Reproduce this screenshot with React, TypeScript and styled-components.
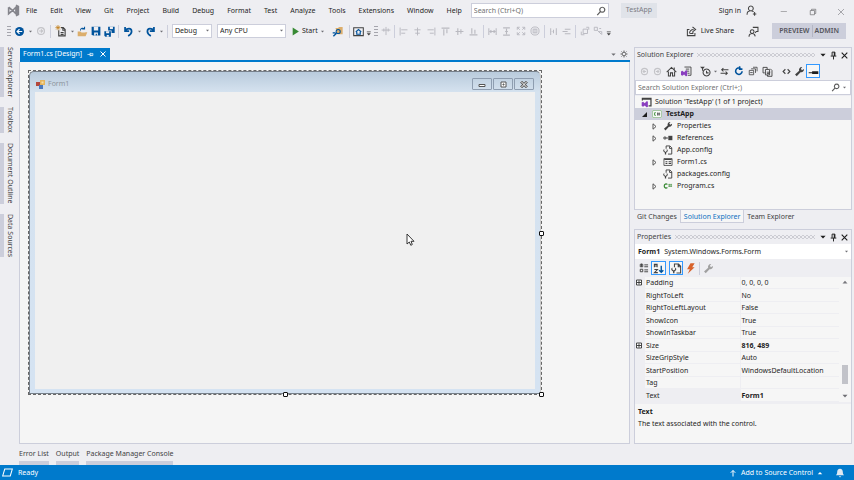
import React from "react";
import styled, { createGlobalStyle, css } from "styled-components";

const c = {
  chrome: "#eeeef2",
  surface: "#f6f6f6",
  border: "#cccedb",
  blue: "#007acc",
  text: "#1e1e1e",
  muted: "#717171",
  icon: "#424242",
  navy: "#00539c",
  off: "#b9b9c0",
};

const Global = createGlobalStyle`
  * { box-sizing: border-box; }
  body { margin: 0; background: ${c.chrome}; }
  body, button, input, select { font-family: "Noto Sans", "Open Sans", sans-serif; font-size: 7px; line-height: 12px; color: ${c.text}; }
  button { border: 0; padding: 0; background: none; display: inline-flex; align-items: center; justify-content: center; white-space: nowrap; }
  svg { display: block; flex: none; }
`;

/* ---------- icons ---------- */
type Shape = { d: string; fill?: string; stroke?: string; w?: number };
const f = (d: string, fill = c.icon): Shape => ({ d, fill });
const s = (d: string, stroke = c.icon, w = 1.5): Shape => ({ d, stroke, w });

const icons: Record<string, Shape[]> = {
  logo: [s("M2 4v8l5-4 4-4v8L7 8 2 4M11 1.5 14 3v10l-3 1.5M13 2v12", "#85858c", 2)],
  back: [f("M8 1.5a6.500 6.500 0 1 0 0 13a6.500 6.500 0 1 0 0-13", c.navy), s("M12 8H5M8 4.500 4.500 8 8 11.500", "#fff", 1.7)],
  backOff: [s("M8 2.500a5.500 5.500 0 1 0 0 11a5.500 5.500 0 1 0 0-11M11 8H5.500M8 5.500 5.500 8 8 10.500", "#c4c4c8", 1.9)],
  fwdOff: [s("M8 2.500a5.500 5.500 0 1 0 0 11a5.500 5.500 0 1 0 0-11M5 8h5.500M8 5.500 10.500 8 8 10.500", "#c4c4c8", 1.9)],
  newFile: [s("M5 7v7.500h8.500V6L11 3.500H8M10.500 3.500V7H13.500M7.500 10h4M7.500 12.500h4"), s("M4 0v7M.5 3.500h7M1.500 1l5 5M6.500 1l-5 5", "#c27d1a", 1)],
  open: [f("M1 8h4l1.500 1.500H12V9h3l-2.500 6H1z", "#dcae6c"), s("M5 6.500C5 3 9 2.500 11 4M11 1v3.500H7.500", c.navy, 1.500)],
  save: [f("M1 1h14v14H3l-2-2z", c.navy), f("M4.500 1h7v6h-7zM5 10.500h6v4.500H9.500v-2.500H7.500V15H5z", c.chrome)],
  saveAll: [f("M6 1h9.500v9H11V6.500H6z", c.navy), f("M8.500 1h4.500v3.500H8.500z", c.chrome), f("M.5 7.500h9.500v8H2l-1.500-1.500z", c.navy), f("M3 7.500h4.500v3H3zM4 13h3v2.500H4z", c.chrome)],
  undo: [s("M3 1.500v6h6M3 7C6 3 12.500 2.500 12.500 8c0 3-2.500 5-5 6.500", c.navy, 2.500)],
  redo: [s("M13 1.500v6H7M13 7C10 3 3.500 2.500 3.500 8c0 3 2.500 5 5 6.500", c.navy, 2.500)],
  play: [f("M3 1 14 8 3 15z", "#388a34")],
  find: [f("M5 3h4l1-1.500h5.500V12H8z", "#dcae6c"), s("M9 5a3 3 0 1 0 0 6a3 3 0 1 0 0-6", c.navy, 1.500), s("M6.500 10.500 2 15M1 10h4", c.navy, 2)],
  homeBox: [s("M1 2.500h14v11.500H1z", c.icon, 1.500), s("M4 8.500 8 5l4 3.500M5.500 8.500v3.500h5V8.500", c.navy, 1.700)],
  snap: [s("M1 6.500h14M8 1.500v13M4.500 4v5M11.500 4v5", c.off)],
  alignL: [s("M2 1v14M4 5h11M4 11h7", c.off, 1.700)],
  alignC: [s("M8 1v14M2.500 5h11M4 11h8", c.off, 1.700)],
  alignR: [s("M14 1v14M1 5h11M5 11h7", c.off, 1.700)],
  alignT: [s("M1 2h14M5 4v11M10.500 4v7", c.off, 2)],
  alignM: [s("M1 8h14M5 2v12M10.500 4v8", c.off, 2)],
  alignB: [s("M1 14h14M5 2v10M10.500 5v7", c.off, 2)],
  sameW: [s("M1.500 2v12M14.500 2v12M3.500 8h9M6 5.500 3.500 8 6 10.500M10 5.500 12.500 8 10 10.500", c.off, 1.800)],
  sameH: [s("M2 1.500h12M2 14.500h12M8 3v10M5.500 8h5", c.off, 2)],
  sameS: [s("M2 6V2h4M14 6V2h-4M2 10v4h4M14 10v4h-4M2 2l4 4M14 2l-4 4M2 14l4-4M14 14l-4-4", c.off, 1.500)],
  target: [s("M8 1.500a6.500 6.500 0 1 0 0 13a6.500 6.500 0 1 0 0-13M5 5h6v6H5zM8 5v6", c.off, 1.500)],
  spaceH: [s("M3 2v12M8 5v6M13 2v12M5 8h1", c.off, 1.800)],
  spaceV: [s("M5 4h10M5 12h10M1 8h9", c.off, 1.800)],
  front: [s("M5 5h7v7H5zM2 9v5h5M10 2h4v4", c.off)],
  behind: [s("M2 2h5v5H2zM9 9h5v5M7 7l6 6M10 4h3", c.off)],
  share: [s("M5 5H2v9h11v-4M5 11c.5-4.500 3-6 6-6M9.500 1.500 14 5 9.500 8.500M6 11h4V8")],
  feedback: [s("M6 5.500a2.700 2.700 0 1 0 .1 0M1.500 15.500c0-3 2-4.500 4.500-4.500s4 1.500 4.500 4M7 2h7.500v6H12l-1.500 2")],
  user: [s("M7 1.500a3.500 3.500 0 1 0 .1 0M1.500 14c0-4 3-5.500 5.500-5.500s3 .5 4 1.500M12.500 10v5.500M10 13h5")],
  search: [s("M10 2a4 4 0 1 0 .1 0M7 9l-5 5.500", "#5c5c5c", 2)],
  gear: [s("M8 4.500a3.500 3.500 0 1 0 .1 0M8 1v3M8 12v3M1 8h3M12 8h3M3 3l2 2M11 11l2 2M13 3l-2 2M5 11l-2 2", c.icon, 1.500)],
  pin: [s("M5.500 2h5v6.500M5.500 2v6.500M3 9h10M8 9v6", "#1e1e1e", 1.700), f("M8.500 2h2v7h-2z", "#1e1e1e")],
  tabPin: [s("M7 4v8M1 8h6M7 5.500h6.500v5H7M7 9.500h6", "#fff", 1.500)],
  close: [s("M3 3l10 10M13 3 3 13", "#1e1e1e", 2)],
  closeW: [s("M3 3l10 10M13 3 3 13", "#fff", 2)],
  winMin: [s("M3 8h11", "#75757a", 1)],
  winMax: [s("M2.500 5h8.500v8.500H2.500zM5 5V2.500h8.500V11H11", "#75757a", 1.500)],
  winX: [s("M2 2l12 12M14 2 2 14", "#75757a", 1.200)],
  home: [s("M1 9l7-7 7 7M3.500 8v6.500h3V10h3v4.500h3V8M12 2v4")],
  vs: [s("M5 1.500h9.500v12H10M7 4.500h5M8 7.500h4M9.500 10.500h3", c.icon, 1.300), f("M0 8l2-1 2.500 2L7 6l2 .5v8L7 15l-2.500-2.500L2 14 0 13V8", "#8a3fc0")],
  clock: [s("M9.500 4.500a5 5 0 1 0 .1 0M9.500 7v3h3"), f("M0 1h7L4.500 4v3H3V4z")],
  sync: [s("M15 5H3M6 2 3 5l3 3M1 11h12M10 8l3 3-3 3", c.icon, 1.800)],
  refresh: [s("M13 8.500a5.200 5.200 0 1 1-2.500-4.700M9 0.500v4.500h4.500", c.navy, 2.500)],
  collapse: [s("M2 7h7v7H2zM5 4.500h7V11M8 2h6.500v6.500M3.500 10.500h4", c.icon, 1.300)],
  showAll: [s("M1.500 2h6v3M1.500 2v8H4M5 5h6v8H5zM8 13v2h6.500V6.500L12 4M7 9h5M7 11h4", c.icon, 1.300)],
  code: [s("M6 4 2 8l4 4M10 4l4 4-4 4", c.icon, 2)],
  wrench: [f("M1.500 12.500 7.500 7C6.500 4 9 1 12 1.500L10 4l1.500 2L14.500 4.500C15 7.500 12 10 9.500 9L4 15z")],
  wrenchOff: [f("M1.500 12.500 7.500 7C6.500 4 9 1 12 1.500L10 4l1.500 2L14.500 4.500C15 7.500 12 10 9.500 9L4 15z", "#a0a0a0")],
  preview: [f("M1 9h5v1.500H1zM6 7.500h9v4H6z", "#1e1e1e")],
  solution: [s("M2 5V2h12.500v11H11M2 3h12", c.icon, 1.800), f("M1 8l2-1 2.500 2L8 6l2 .5v8L8 15l-2.500-2.500L3 14l-2-1V8", "#8a3fc0")],
  csproj: [f("M0 1.500h16v13H0z", "#fff"), s("M1 2.500h14v11H1z", "#7fae7c", 1.200), s("M6.500 6H4v4h2.500", "#388a34", 1.300), s("M9 5.500v5M11.500 5.500v5M8 7h5M8 9.200h5", c.icon, 1)],
  refs: [s("M1.500 6.500h3v3h-3zM5 8h3", c.icon, 1.500), f("M8.500 4.500H15v7H8.500z")],
  config: [s("M5 6V1.500h6L14 4.500v10H8M10.500 2v3.500H14", c.icon, 1.500), f("M2 6.500v3L4 11l2-1.500v-3L7.500 8v2L5 12.200V15H3v-2.800L.5 10V8z")],
  form: [s("M1.500 2.500h13v11h-13z", c.icon, 1.300), s("M2 4h12M4 7.500h3M4 10.500h3M9 7.500h4M9 10.500h4", c.icon, 1.700)],
  cs: [s("M7 5.500C5 4 2 5 2 8s3 4 5 2.500", "#388a34", 2), s("M10 4.500v5M13 4.500v5M8.500 6h6M8.500 8.500h6", "#388a34", 1)],
  categorized: [s("M2 2h4v4H2zM2 10h4v4H2zM4 1v5M8.500 3h6M8.500 6h6M8.500 11h6M8.500 14h6", c.icon, 1.500)],
  sort: [s("M2 6V2h4v4M2 4.500h4M2 9.500h4.500L2 14h5", c.icon, 1.500), s("M12 4v9M9 10.500l3 3 3-3", c.navy, 2)],
  bolt: [f("M8 .5h6L10.500 6H14L4 15.500 7 9H3z", "#d8622b")],
  bell: [f("M8 1c3 0 4.500 2.200 4.500 5.300 0 2.200.5 3.700 2 5.200h-13c1.500-1.500 2-3 2-5.200C3.500 3.200 5 1 8 1zM6 13h4l-2 2z", "#dfe9f2")],
  up: [s("M8 15V3M3.500 7.500 8 3l4.500 4.500", "#fff", 2)],
  ready: [s("M4 3h11l-3 10H1z", "#fff", 1.500)],
  overflow: [f("M5 8h7v1.500H5zM5 11h7l-3.500 4z")],
  down: [f("M3 5.500h10L8 11z", "#6e6e73")],
  downBlack: [f("M1 4.500h14L8 12z", "#1e1e1e")],
  upSmall: [f("M3 11h10L8 5.500z", "#77777c")],
  upWhite: [f("M2 11h12L8 5z", "#fff")],
};

const Icon = ({ name, size = 12 }: { name: string; size?: number }) => (
  <svg width={size} height={size} viewBox="0 0 16 16" aria-hidden="true">
    {icons[name].map((p, i) => (
      <path key={i} d={p.d} fill={p.fill ?? "none"} stroke={p.stroke} strokeWidth={p.w} />
    ))}
  </svg>
);

/* ---------- shell ---------- */
const Shell = styled.div`
  display: grid;
  grid-template-rows: 47px minmax(0, 1fr) 21px 15px;
  height: 100vh;
  min-width: 800px;
  overflow: hidden;
  background: ${c.chrome};
`;
const TopArea = styled.header`
  display: grid;
  grid-template-rows: 21px 20px;
`;
const MenuBar = styled.div`
  display: flex;
  align-items: center;
  padding: 0 4px 0 7px;
`;
const Menu = styled.nav`
  display: flex;
  gap: 13px;
  margin: 0 9px 0 6px;
`;
const SearchField = styled.label<{ $w?: number }>`
  display: flex;
  align-items: center;
  height: 15px;
  background: #fff;
  border: 1px solid ${c.border};
  padding: 0 2px;
  ${(p) => p.$w && css`width: ${p.$w}px;`}
  input {
    flex: 1;
    min-width: 0;
    border: 0;
    padding: 0;
    outline: 0;
    background: none;
  }
  input::placeholder { color: ${c.muted}; opacity: 1; }
`;
const AppChip = styled.span`
  margin-left: 12px;
  padding: 1px 5px 2px;
  background: #e0e3e9;
  color: #7c7c84;
`;
const Spacer = styled.span`flex: 1;`;
const Gap = styled.span<{ $w: number }>`width: ${(p) => p.$w}px; flex: none;`;
const SignIn = styled.button`gap: 5px;`;
const WindowButtons = styled.div`
  display: flex;
  margin-left: 12px;
`;
const WindowButton = styled.button`width: 29px; height: 16px; padding-top: 2px;
  &:last-child { width: 14px; margin-left: 7px; margin-right: 2px; }
`;
const Toolbar = styled.div`
  display: flex;
  align-items: center;
  padding: 0 8px 0 5px;
`;
const Tool = styled.button<{ $w?: number; $on?: boolean }>`
  width: ${(p) => p.$w ?? 14}px;
  height: 14px;
  flex: none;
  ${(p) => p.$on && css`border: 1px solid #3399ff; background: ${c.surface};`}
`;
const Sep = styled.span`
  width: 1px;
  height: 13px;
  margin: 0 2px;
  background: ${c.border};
  flex: none;
`;
const Grip = styled.span`
  width: 4px;
  height: 13px;
  margin: 0 2px;
  flex: none;
  background: radial-gradient(circle, #a5a5ad 0 0.5px, transparent 1px) 0 0 / 2px 3px;
`;
const Picker = styled.span<{ $w: number }>`
  position: relative;
  width: ${(p) => p.$w}px;
  height: 14px;
  margin-left: 2px;
  margin-right: 3px;
  select {
    display: block;
    appearance: none;
    width: 100%;
    height: 14px;
    padding: 0 2px;
    border: 1px solid ${c.border};
    border-radius: 0;
    background: #fff;
  }
  svg { position: absolute; right: 2px; top: 4px; pointer-events: none; }
`;
const LiveShare = styled.button`gap: 4px;`;
const PreviewBadge = styled.span`
  display: flex;
  align-items: center;
  height: 16px;
  padding: 0 7px;
  background: ${c.border};
  color: #55555c;
  font-weight: 600;
  span + span {
    margin-left: 2px;
    padding-left: 2px;
    border-left: 1px solid #b4b6c4;
  }
`;

/* ---------- workspace ---------- */
const Workspace = styled.main`
  display: grid;
  grid-template-columns: 19px minmax(0, 1fr) 218px;
  padding-right: 2px;
`;
const SideTabs = styled.nav`
  display: flex;
  flex-direction: column;
  align-items: flex-start;
  gap: 10px;
`;
const SideTab = styled.button`
  writing-mode: vertical-rl;
  border-left: 4px solid ${c.border};
  width: 16px;
  color: ${c.icon};
`;
const DocumentArea = styled.section`
  display: flex;
  flex-direction: column;
  margin-right: 4px;
`;
const DocTabs = styled.div`
  display: flex;
  align-items: center;
  height: 15px;
  margin-left: 1px;
  border-bottom: 2px solid ${c.blue};
  padding-top: 1px;
`;
const DocTab = styled.button`
  height: 12px;
  padding: 0 3px;
  gap: 5px;
  background: ${c.blue};
  color: #fff;
`;
const Canvas = styled.div`
  flex: 1;
  min-height: 0;
  padding: 8px;
  background: #f5f5f5;
  border: solid ${c.border};
  border-width: 0 1px 1px;
`;
const FormFrame = styled.div`
  position: relative;
  display: flex;
  flex-direction: column;
  width: 514px;
  height: 325px;
  border: 1px dashed #666;
`;
const FormBody = styled.div`
  flex: 1;
  display: flex;
  flex-direction: column;
  border: 1px solid #77808a;
  border-radius: 5px 5px 0 0;
  border-right-color: #c9c9c9;
  padding: 0 5px 4px;
  background: linear-gradient(#b9cbdc, #d5e2ef 20px, #d5e3f2);
`;
const FormTitle = styled.div`
  display: flex;
  align-items: center;
  gap: 3px;
  height: 20px;
  padding: 4px 1px 0;
  color: #8d949c;
`;
const FormButtons = styled.div`
  display: flex;
  gap: 1px;
`;
const FormButton = styled.span`
  display: flex;
  align-items: center;
  justify-content: center;
  width: 20px;
  height: 12px;
  border: 1px solid #8e9db0;
  border-radius: 1px;
`;
const FormClient = styled.div`
  flex: 1;
  background: #f0f0f0;
`;
const Handle = styled.i<{ $x: string; $y: string }>`
  position: absolute;
  left: ${(p) => p.$x};
  top: ${(p) => p.$y};
  width: 5px;
  height: 5px;
  margin: -2px;
  background: #fff;
  border: 1px solid #111;
  border-radius: 1px;
`;
const Pointer = styled.svg`
  position: absolute;
  left: 377px;
  top: 162px;
`;

/* ---------- docked panels ---------- */
const Dock = styled.aside`
  display: grid;
  grid-template-rows: 163px 13px minmax(0, 1fr);
  min-width: 0;
`;
const Panel = styled.section`
  display: flex;
  flex-direction: column;
  border: 1px solid ${c.border};
  min-height: 0;
`;
const PanelHeader = styled.header`
  display: flex;
  align-items: center;
  height: 14px;
  padding: 0 2px;
  color: ${c.icon};
`;
const Dots = styled.span`
  flex: 1;
  height: 4px;
  margin: 0 3px 0 4px;
  background: radial-gradient(circle, #b4b4bc 0 0.5px, transparent 1px) 0 0 / 4px 4px,
    radial-gradient(circle, #b4b4bc 0 0.5px, transparent 1px) 2px 2px / 4px 4px;
`;
const PanelTools = styled.div<{ $h: number }>`
  display: flex;
  align-items: center;
  height: ${(p) => p.$h}px;
  padding: 0 2px;
`;
const Tree = styled.ul`
  flex: 1;
  margin: 1px 0 0;
  padding: 0;
  list-style: none;
  background: ${c.surface};
`;
const TreeRow = styled.li<{ $level: number; $selected?: boolean }>`
  display: flex;
  align-items: center;
  height: 12px;
  padding-left: ${(p) => [0, 4, 13][p.$level]}px;
  ${(p) => p.$selected && css`background: ${c.border}; font-weight: 700;`}
`;
const Twisty = styled.span<{ $w: number }>`
  display: flex;
  justify-content: center;
  width: ${(p) => p.$w}px;
`;
const TreeIcon = styled.span`
  display: flex;
  width: 16px;
  padding-left: 2px;
`;
const DockTabs = styled.nav`
  display: flex;
`;
const DockTab = styled.button<{ $active?: boolean }>`
  padding: 1px 3px 0;
  height: 13px;
  color: ${c.icon};
  ${(p) => p.$active && css`
    color: #0e70c0;
    background: ${c.surface};
    border: solid ${c.border};
    border-width: 0 1px 1px;
    padding: 2px 3px 0;
  `}
`;
const PropertyPanel = styled(Panel)`margin-top: 6px;`;
const ObjectPicker = styled.button`
  height: 15px;
  width: 100%;
  flex: none;
  justify-content: flex-start;
  gap: 4px;
  padding: 0 2px 0 3px;
  background: #fff;
  b { font-weight: 700; }
`;
const GridArea = styled.div`
  display: flex;
  height: 125px;
  background: ${c.surface};
`;
const PropertyTable = styled.table`
  flex: 1;
  height: 125px;
  border-collapse: collapse;
  table-layout: fixed;
  td, th {
    padding: 0 1px;
    line-height: 11px;
    text-align: left;
    font-weight: 400;
    border-bottom: 1px solid ${c.chrome};
    white-space: nowrap;
  }
  td:first-child { width: 10px; border: 0; background: ${c.chrome}; }
  th { width: 95px; }
`;
const Value = styled.td<{ $bold?: boolean }>`
  && { font-weight: ${(p) => (p.$bold ? 700 : 400)}; border-left: 1px solid ${c.chrome}; }
`;
const NameCell = styled.th<{ $current?: boolean }>`
  ${(p) => p.$current && css`background: ${c.chrome};`}
`;
const Scrollbar = styled.div`
  display: flex;
  flex-direction: column;
  align-items: center;
  width: 12px;
  padding: 1px 0 2px;
`;
const Thumb = styled.span`
  width: 6px;
  height: 19px;
  margin: auto 0 8px;
  background: #c2c3c9;
`;
const Description = styled.div`
  flex: 1;
  padding: 2px 3px;
  border-top: 2px solid ${c.chrome};
  background: ${c.surface};
  p { margin: 0; }
`;

/* ---------- bottom ---------- */
const OutputTabs = styled.nav`
  display: flex;
  gap: 7px;
  padding: 4px 0 0 19px;
`;
const OutputTab = styled.button`
  align-items: flex-start;
  border-bottom: 4px solid ${c.border};
  color: ${c.icon};
`;
const StatusBar = styled.footer`
  display: flex;
  align-items: center;
  padding: 0 9px 0 2px;
  gap: 5px;
  background: ${c.blue};
  color: #fff;
`;
const SourceControl = styled.button`
  gap: 4px;
  margin-right: 7px;
  color: #fff;
`;

const menus = ["File", "Edit", "View", "Git", "Project", "Build", "Debug", "Format", "Test", "Analyze", "Tools", "Extensions", "Window", "Help"];

const T = ({ n, w, size, on }: { n: string; w?: number; size?: number; on?: boolean }) => (
  <Tool $w={w} $on={on} aria-label={n}><Icon name={n} size={size} /></Tool>
);
const Caret = ({ w = 8 }: { w?: number }) => <T n="down" w={w} size={5} />;

const Expander = ({ open }: { open?: boolean }) => (
  <svg width="6" height="7" viewBox="0 0 6 7" aria-hidden="true">
    {open ? <path d="M5 1v5H0z" fill="#1e1e1e" /> : <path d="M1 .8 4 3.500 1 6.200z" fill="#fff" stroke="#555" />}
  </svg>
);

const tree = [
  { label: "Properties", icon: "wrench", expand: true },
  { label: "References", icon: "refs", expand: true },
  { label: "App.config", icon: "config" },
  { label: "Form1.cs", icon: "form", expand: true },
  { label: "packages.config", icon: "config" },
  { label: "Program.cs", icon: "cs", expand: true },
];

const properties: { name: string; value: string; bold?: boolean; expand?: boolean }[] = [
  { name: "Padding", value: "0, 0, 0, 0", expand: true },
  { name: "RightToLeft", value: "No" },
  { name: "RightToLeftLayout", value: "False" },
  { name: "ShowIcon", value: "True" },
  { name: "ShowInTaskbar", value: "True" },
  { name: "Size", value: "816, 489", bold: true, expand: true },
  { name: "SizeGripStyle", value: "Auto" },
  { name: "StartPosition", value: "WindowsDefaultLocation" },
  { name: "Tag", value: "" },
  { name: "Text", value: "Form1", bold: true },
];

const Header = ({ title }: { title: string }) => (
  <PanelHeader>
    {title}
    <Dots />
    <T n="downBlack" w={10} size={6} />
    <T n="pin" w={11} size={9} />
    <T n="close" w={10} size={9} />
  </PanelHeader>
);

export default function App() {
  return (
    <Shell>
      <Global />
      <TopArea>
        <MenuBar>
          <Icon name="logo" size={13} />
          <Menu>{menus.map((m) => <button key={m}>{m}</button>)}</Menu>
          <SearchField $w={138}>
            <input aria-label="Search" placeholder="Search (Ctrl+Q)" />
            <Icon name="search" size={10} />
          </SearchField>
          <AppChip>TestApp</AppChip>
          <Spacer />
          <SignIn>Sign in <Icon name="user" size={11} /></SignIn>
          <WindowButtons>
            <WindowButton aria-label="Minimize"><Icon name="winMin" size={9} /></WindowButton>
            <WindowButton aria-label="Restore"><Icon name="winMax" size={8} /></WindowButton>
            <WindowButton aria-label="Close"><Icon name="winX" size={8} /></WindowButton>
          </WindowButtons>
        </MenuBar>
        <Toolbar>
          <Grip />
          <T n="back" size={11} w={13} /><Caret /><T n="fwdOff" size={10} />
          <Sep />
          <T n="newFile" w={16} /><Caret w={6} /><T n="open" size={11} /><T n="save" size={10} /><T n="saveAll" w={13} size={11} />
          <Sep />
          <T n="undo" size={11} /><Caret /><T n="redo" size={11} /><Caret />
          <Sep />
          <Picker $w={40}>
            <select aria-label="Configuration"><option>Debug</option></select>
            <Icon name="down" size={5} />
          </Picker>
          <Picker $w={69}>
            <select aria-label="Platform"><option>Any CPU</option></select>
            <Icon name="down" size={5} />
          </Picker>
          <T n="play" size={9} w={13} />
          <button>Start</button><Caret w={10} />
          <T n="find" w={19} size={11} />
          <Sep />
          <T n="homeBox" size={11} /><T n="overflow" w={6} size={9} />
          <Grip />
          <T n="snap" w={12} size={10} />
          <Sep />
          <T n="alignL" size={9} /><T n="alignC" size={9} /><T n="alignR" size={9} />
          <T n="alignT" size={9} /><T n="alignM" size={9} /><T n="alignB" size={9} />
          <Sep />
          <T n="sameW" size={9} /><T n="sameH" size={9} /><T n="sameS" size={10} /><T n="target" size={10} />
          <Sep />
          <T n="spaceH" w={13} size={9} /><T n="spaceV" w={13} size={9} />
          <Sep />
          <T n="front" size={10} /><T n="behind" w={13} size={10} /><T n="overflow" w={8} size={9} />
          <Spacer />
          <LiveShare><Icon name="share" size={11} />Live Share</LiveShare>
          <T n="feedback" w={38} size={11} />
          <PreviewBadge><span>PREVIEW</span><span>ADMIN</span></PreviewBadge>
        </Toolbar>
      </TopArea>

      <Workspace>
        <SideTabs>
          {["Server Explorer", "Toolbox", "Document Outline", "Data Sources"].map((t) => <SideTab key={t}>{t}</SideTab>)}
        </SideTabs>
        <DocumentArea>
          <DocTabs>
            <DocTab>Form1.cs [Design] <Icon name="tabPin" size={7} /><Icon name="closeW" size={8} /></DocTab>
            <Spacer />
            <T n="down" w={10} size={7} />
            <T n="gear" w={12} size={8} />
          </DocTabs>
          <Canvas>
            <FormFrame>
              <FormBody>
                <FormTitle>
                  <svg width="9" height="9" viewBox="0 0 9 9" aria-hidden="true">
                    <path d="M0 2h4v4H0z" fill="#b5483c" />
                    <path d="M4 0h5v5H4z" fill="#e5b45c" />
                    <path d="M3 5h4v4H3z" fill="#4a78bd" />
                    <path d="M5.500 1.500h2v2h-2z" fill="#f6dfa8" />
                  </svg>
                  Form1
                  <Spacer />
                  <FormButtons>
                    <FormButton><svg width="8" height="6"><path d="M1 3.500h6v2H1z" fill="#fff" stroke="#555" /></svg></FormButton>
                    <FormButton><svg width="7" height="7"><path d="M1 1h5v5H1zM3 3h1v1H3z" fill="#fff" stroke="#555" /></svg></FormButton>
                    <FormButton><svg width="8" height="7"><path d="M1 .5 7 6.500M7 .5 1 6.500" stroke="#555" strokeWidth="2.500" /><path d="M1 .5 7 6.500M7 .5 1 6.500" stroke="#fff" /></svg></FormButton>
                  </FormButtons>
                </FormTitle>
                <FormClient />
              </FormBody>
              <Handle $x="100%" $y="50%" />
              <Handle $x="50%" $y="100%" />
              <Handle $x="100%" $y="100%" />
              <Pointer width="9" height="13" viewBox="0 0 9 13" aria-hidden="true">
                <path d="M1 1v10l2.300-2 1.500 3.300 1.500-.8L5 8.300h3z" fill="#fff" stroke="#222" strokeWidth=".9" />
              </Pointer>
            </FormFrame>
          </Canvas>
        </DocumentArea>

        <Dock>
          <Panel>
            <Header title="Solution Explorer" />
            <PanelTools $h={18}>
              <T n="backOff" size={9} /><T n="fwdOff" size={9} w={13} /><T n="home" size={11} w={15} /><T n="vs" size={11} />
              <Gap $w={5} />
              <T n="clock" size={11} /><Caret w={6} /><T n="sync" size={9} w={13} /><T n="refresh" size={10} w={15} /><T n="collapse" size={10} /><T n="showAll" size={11} />
              <Gap $w={5} />
              <T n="code" size={9} /><T n="wrench" size={11} w={13} /><T n="preview" size={11} on />
            </PanelTools>
            <SearchField>
              <input aria-label="Search Solution Explorer" placeholder="Search Solution Explorer (Ctrl+;)" />
              <Icon name="search" size={9} /><Caret />
            </SearchField>
            <Tree>
              <TreeRow $level={1}><TreeIcon><Icon name="solution" size={11} /></TreeIcon>Solution 'TestApp' (1 of 1 project)</TreeRow>
              <TreeRow $level={1} $selected><Twisty $w={11}><Expander open /></Twisty><TreeIcon><Icon name="csproj" size={10} /></TreeIcon>TestApp</TreeRow>
              {tree.map((r) => (
                <TreeRow key={r.label} $level={2}>
                  <Twisty $w={13}>{r.expand && <Expander />}</Twisty>
                  <TreeIcon><Icon name={r.icon} size={10} /></TreeIcon>
                  {r.label}
                </TreeRow>
              ))}
            </Tree>
          </Panel>
          <DockTabs>
            <DockTab>Git Changes</DockTab>
            <DockTab $active>Solution Explorer</DockTab>
            <DockTab>Team Explorer</DockTab>
          </DockTabs>
          <PropertyPanel>
            <Header title="Properties" />
            <ObjectPicker><b>Form1</b><span>System.Windows.Forms.Form</span><Spacer /><Icon name="down" size={5} /></ObjectPicker>
            <PanelTools $h={18}>
              <T n="categorized" size={10} /><T n="sort" size={11} w={15} on />
              <Gap $w={3} />
              <T n="config" size={11} on /><T n="bolt" size={11} />
              <Sep />
              <T n="wrenchOff" size={11} w={13} />
            </PanelTools>
            <GridArea>
              <PropertyTable>
                <tbody>
                  {properties.map((p) => (
                    <tr key={p.name}>
                      <td>
                        {p.expand && (
                          <svg width="6" height="7" viewBox="0 0 6 7" aria-hidden="true">
                            <path d="M.5 1h5v5h-5zM1 3.500h4M3 1.500v4" fill="#fff" stroke="#333" strokeWidth=".9" />
                          </svg>
                        )}
                      </td>
                      <NameCell scope="row" $current={p.name === "Text"}>{p.name}</NameCell>
                      <Value $bold={p.bold}>{p.value}</Value>
                    </tr>
                  ))}
                </tbody>
              </PropertyTable>
              <Scrollbar><Icon name="upSmall" size={8} /><Thumb /><Icon name="down" size={8} /></Scrollbar>
            </GridArea>
            <Description>
              <p><b>Text</b></p>
              <p>The text associated with the control.</p>
            </Description>
          </PropertyPanel>
        </Dock>
      </Workspace>

      <OutputTabs>
        {["Error List", "Output", "Package Manager Console"].map((t) => <OutputTab key={t}>{t}</OutputTab>)}
      </OutputTabs>
      <StatusBar>
        <Icon name="ready" size={11} />
        <span>Ready</span>
        <Spacer />
        <SourceControl><Icon name="up" size={8} />Add to Source Control <Icon name="upWhite" size={6} /></SourceControl>
        <Icon name="bell" size={10} />
      </StatusBar>
    </Shell>
  );
}
